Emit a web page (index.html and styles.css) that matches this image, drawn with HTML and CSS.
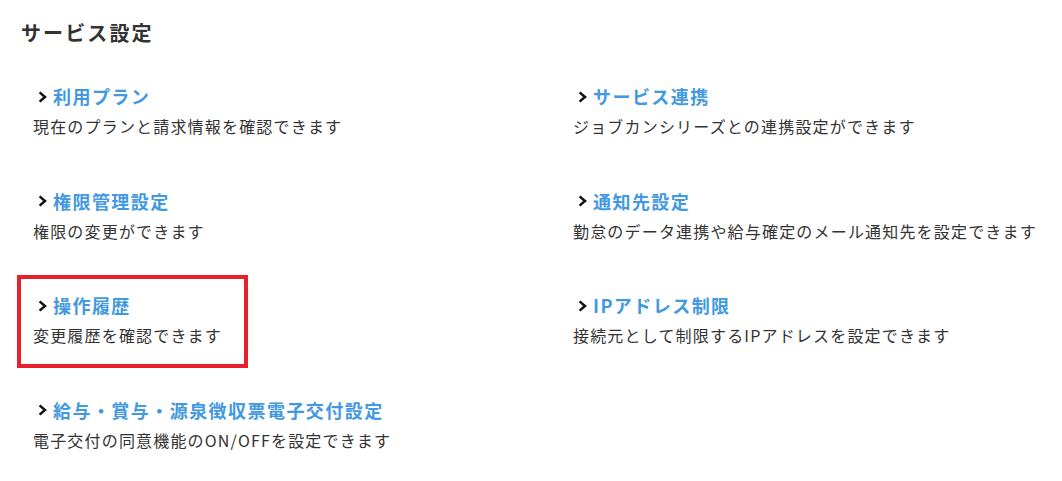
FILE: index.html
```html
<!DOCTYPE html>
<html lang="ja">
<head>
<meta charset="utf-8">
<title>サービス設定</title>
<link rel="stylesheet" href="styles.css">
</head>
<body>
<main class="page">
  <h1 class="title">サービス設定</h1>
  <div class="grid">
    <div class="item">
      <a class="link" href="#"><svg class="chev" viewBox="0 0 10 12"><path d="M1.6 1.4 L7 6 L1.6 10.6"/></svg><span>利用プラン</span></a>
      <p class="desc">現在のプランと請求情報を確認できます</p>
    </div>
    <div class="item">
      <a class="link" href="#"><svg class="chev" viewBox="0 0 10 12"><path d="M1.6 1.4 L7 6 L1.6 10.6"/></svg><span>サービス連携</span></a>
      <p class="desc">ジョブカンシリーズとの連携設定ができます</p>
    </div>
    <div class="item">
      <a class="link" href="#"><svg class="chev" viewBox="0 0 10 12"><path d="M1.6 1.4 L7 6 L1.6 10.6"/></svg><span>権限管理設定</span></a>
      <p class="desc">権限の変更ができます</p>
    </div>
    <div class="item">
      <a class="link" href="#"><svg class="chev" viewBox="0 0 10 12"><path d="M1.6 1.4 L7 6 L1.6 10.6"/></svg><span>通知先設定</span></a>
      <p class="desc">勤怠のデータ連携や給与確定のメール通知先を設定できます</p>
    </div>
    <div class="item">
      <div class="highlight">
        <a class="link" href="#"><svg class="chev" viewBox="0 0 10 12"><path d="M1.6 1.4 L7 6 L1.6 10.6"/></svg><span>操作履歴</span></a>
        <p class="desc">変更履歴を確認できます</p>
      </div>
    </div>
    <div class="item">
      <a class="link" href="#"><svg class="chev" viewBox="0 0 10 12"><path d="M1.6 1.4 L7 6 L1.6 10.6"/></svg><span>IPアドレス制限</span></a>
      <p class="desc">接続元として制限するIPアドレスを設定できます</p>
    </div>
    <div class="item">
      <a class="link" href="#"><svg class="chev" viewBox="0 0 10 12"><path d="M1.6 1.4 L7 6 L1.6 10.6"/></svg><span>給与・賞与・源泉徴収票電子交付設定</span></a>
      <p class="desc">電子交付の同意機能のON/OFFを設定できます</p>
    </div>
  </div>
</main>
</body>
</html>
```

FILE: styles.css
```css
* { box-sizing: border-box; }
html, body { margin: 0; padding: 0; background: #fff; }
body {
  font-family: "Noto Sans CJK JP", "Noto Sans", sans-serif;
  color: #333;
}
.page {
  padding: 19px 0 0 21px;
}
.title {
  margin: 0 0 23px 0;
  font-size: 20px;
  line-height: 28px;
  font-weight: 700;
  letter-spacing: 2.1px;
  color: #333;
}
.grid {
  display: grid;
  grid-template-columns: 540px 540px;
  row-gap: 19.5px;
}
.item {
  height: 85px;
}
.highlight {
  display: inline-block;
  height: 85px;
  padding-right: 22px;
  outline: 4px solid #e8202a;
}
.link {
  display: flex;
  align-items: center;
  padding: 13px 0 0 17px;
  height: 39px;
  font-size: 18px;
  line-height: 26px;
  font-weight: 700;
  letter-spacing: 1.45px;
  color: #4299e1;
  text-decoration: none;
}
.chev {
  width: 10px;
  height: 12px;
  margin-right: 5px;
  margin-top: 1px;
  flex: none;
}
.chev path {
  fill: none;
  stroke: #111;
  stroke-width: 2.5;
  stroke-linecap: butt;
  stroke-linejoin: miter;
}
.desc {
  margin: 5px 0 0 0;
  padding-left: 12px;
  font-size: 16px;
  line-height: 24px;
  letter-spacing: 1.18px;
  color: #333;
  white-space: nowrap;
}
```
